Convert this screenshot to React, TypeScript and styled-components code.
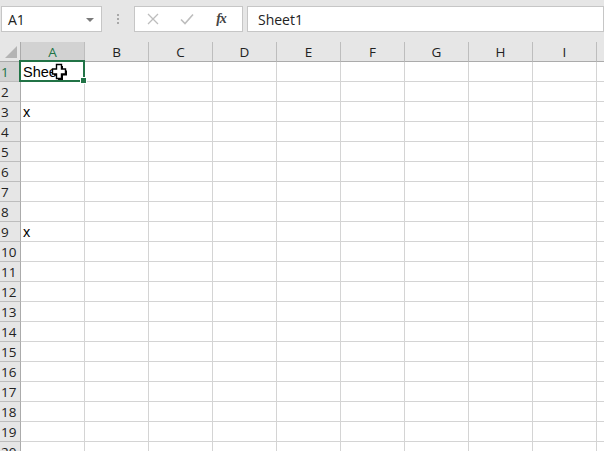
import React from 'react';
import styled, { createGlobalStyle } from 'styled-components';

const GlobalStyle = createGlobalStyle`
  html, body {
    margin: 0;
    padding: 0;
    background: #ffffff;
    overflow: hidden;
  }
  body {
    font-family: "Open Sans", "Noto Sans", sans-serif;
  }
`;

const COLUMNS = ['A', 'B', 'C', 'D', 'E', 'F', 'G', 'H', 'I', 'J'];
const ROWS = Array.from({ length: 20 }, (_, i) => i + 1);
const VALUES: Record<string, string> = { A1: 'Shee', A3: 'x', A9: 'x' };

const Page = styled.div`
  width: 604px;
  height: 451px;
  overflow: hidden;
  background: #ffffff;
  display: flex;
  flex-direction: column;
`;

const Toolbar = styled.div`
  flex-shrink: 0;
  height: 42px;
  background: #e6e6e6;
  display: flex;
  align-items: flex-start;
  padding: 6px 0 0 1px;
  box-sizing: border-box;
`;

const Box = styled.div<{ $width?: number }>`
  height: 26px;
  box-sizing: border-box;
  border: 1px solid #c6c6c6;
  background: #ffffff;
  display: flex;
  align-items: center;
  ${(p) => (p.$width ? `width: ${p.$width}px;` : 'flex: 1;')}
`;

const NameText = styled.span`
  flex: 1;
  padding-left: 6px;
  font-size: 14px;
  color: #222;
`;

const Arrow = styled.span`
  width: 0;
  height: 0;
  border-left: 4px solid transparent;
  border-right: 4px solid transparent;
  border-top: 4px solid #7a7a7a;
  margin-right: 7px;
  margin-top: 1px;
`;

const Grip = styled.div`
  width: 32px;
  height: 26px;
  display: flex;
  flex-direction: column;
  align-items: center;
  justify-content: center;
  gap: 2px;
  span {
    width: 2px;
    height: 2px;
    background: #a8a8a8;
  }
`;

const IconButton = styled.div`
  width: 34px;
  height: 24px;
  display: flex;
  align-items: center;
  justify-content: center;
`;

const Fx = styled.span`
  font-family: "Liberation Serif", "DejaVu Serif", serif;
  font-style: italic;
  font-weight: bold;
  font-size: 14px;
  color: #444;
  letter-spacing: -1px;
`;

const Gap = styled.div<{ $w: number }>`
  width: ${(p) => p.$w}px;
`;

const FormulaText = styled.span`
  padding-left: 10px;
  font-size: 14px;
  color: #222;
`;

const Sheet = styled.div`
  position: relative;
  flex-shrink: 0;
  display: grid;
  grid-template-columns: 21px repeat(10, 64px);
  grid-template-rows: 20px;
  grid-auto-rows: 20px;
`;

const Corner = styled.div`
  background: #e6e6e6;
  border-right: 1px solid #ababab;
  border-bottom: 1px solid #ababab;
  position: relative;
  &::after {
    content: '';
    position: absolute;
    right: 3px;
    bottom: 3px;
    width: 0;
    height: 0;
    border-left: 12px solid transparent;
    border-bottom: 12px solid #b4b4b4;
  }
`;

const ColHead = styled.div<{ $active?: boolean }>`
  background: ${(p) => (p.$active ? '#d2d2d2' : '#e6e6e6')};
  border-right: 1px solid #bdbdbd;
  border-bottom: 1px solid #ababab;
  display: flex;
  align-items: center;
  justify-content: center;
  font-size: 13.5px;
  color: ${(p) => (p.$active ? '#217346' : '#222')};
`;

const RowHead = styled.div<{ $active?: boolean }>`
  background: ${(p) => (p.$active ? '#d2d2d2' : '#e6e6e6')};
  border-right: 1px solid #ababab;
  border-bottom: 1px solid #bdbdbd;
  display: flex;
  align-items: center;
  padding-left: 1px;
  font-size: 13.5px;
  color: ${(p) => (p.$active ? '#217346' : '#222')};
`;

const Cell = styled.div`
  border-right: 1px solid #d4d4d4;
  border-bottom: 1px solid #d4d4d4;
  display: flex;
  align-items: flex-end;
  padding: 0 0 1px 2px;
  font-family: "Liberation Sans", Arial, sans-serif;
  font-size: 14.5px;
  color: #000;
  overflow: hidden;
  white-space: nowrap;
`;

const Selection = styled.div`
  position: absolute;
  left: 19px;
  top: 18px;
  width: 66px;
  height: 22px;
  box-sizing: border-box;
  border: 2px solid #217346;
  pointer-events: none;
  &::after {
    content: '';
    position: absolute;
    right: -4px;
    bottom: -4px;
    width: 5px;
    height: 5px;
    background: #217346;
    border: 1px solid #ffffff;
  }
`;

const Cursor = styled.svg`
  position: absolute;
  left: 51px;
  top: 21px;
`;

const CROSS = 'M5 1H10V5.5H14V10.5H10V15H5V10.5H1V5.5H5Z';

const App = () => {
  return (
    <>
      <GlobalStyle />
      <Page>
        <Toolbar>
          <Box $width={101}>
            <NameText>A1</NameText>
            <Arrow />
          </Box>
          <Grip>
            <span />
            <span />
            <span />
          </Grip>
          <Box $width={109}>
            <Gap $w={1} />
            <IconButton>
              <svg width="12" height="12" viewBox="0 0 12 12">
                <path d="M1 1L11 11M11 1L1 11" stroke="#bdbdbd" strokeWidth="1.3" />
              </svg>
            </IconButton>
            <IconButton>
              <svg width="14" height="12" viewBox="0 0 14 12">
                <path d="M1 6.5L5 10.5L13 1.5" stroke="#bdbdbd" strokeWidth="1.6" fill="none" />
              </svg>
            </IconButton>
            <IconButton>
              <Fx>fx</Fx>
            </IconButton>
          </Box>
          <Gap $w={4} />
          <Box>
            <FormulaText>Sheet1</FormulaText>
          </Box>
        </Toolbar>
        <Sheet>
          <Corner />
          {COLUMNS.map((c) => (
            <ColHead key={c} $active={c === 'A'}>
              {c === 'J' ? '' : c}
            </ColHead>
          ))}
          {ROWS.map((r) => (
            <React.Fragment key={r}>
              <RowHead $active={r === 1}>{r}</RowHead>
              {COLUMNS.map((c) => (
                <Cell key={c}>{VALUES[`${c}${r}`] ?? ''}</Cell>
              ))}
            </React.Fragment>
          ))}
          <Selection />
          <Cursor width="18" height="18" viewBox="0 0 18 18">
            <path d={CROSS} fill="#000" transform="translate(2 2)" />
            <path d={CROSS} fill="#fff" stroke="#000" strokeWidth="1.4" transform="translate(0.5 0.5)" />
          </Cursor>
        </Sheet>
      </Page>
    </>
  );
};

export default App;
